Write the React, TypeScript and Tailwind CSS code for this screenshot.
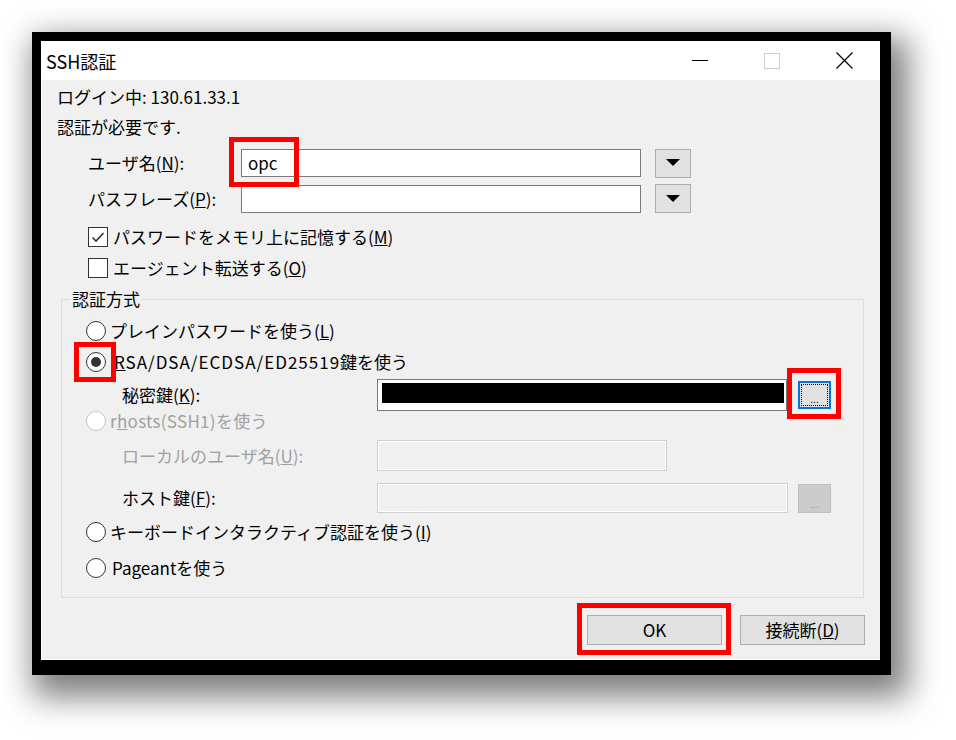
import React from "react";

function Radio({ checked = false, disabled = false }: { checked?: boolean; disabled?: boolean }) {
  return (
    <span
      className={
        "flex h-[20px] w-[20px] shrink-0 items-center justify-center rounded-full border-[1.5px] bg-white " +
        (disabled ? "border-[#c4c4c4]" : "border-[#333333]")
      }
    >
      {checked && <span className="h-[10px] w-[10px] rounded-full bg-[#333333]" />}
    </span>
  );
}

function Checkbox({ checked = false }: { checked?: boolean }) {
  return (
    <span className="flex h-[20px] w-[20px] shrink-0 items-center justify-center border-[1.5px] border-[#333333] bg-white">
      {checked && (
        <svg width="14" height="12" viewBox="0 0 14 12">
          <path d="M1.5 6.5 L5 10 L12.5 2" fill="none" stroke="#333333" strokeWidth="1.6" />
        </svg>
      )}
    </span>
  );
}

function DropButton() {
  return (
    <span className="ml-[14px] flex h-[29px] w-[36px] items-center justify-center border border-[#adadad] bg-[#e1e1e1]">
      <svg width="14" height="8" viewBox="0 0 14 8">
        <polygon points="0,0 14,0 7,7" fill="#000" />
      </svg>
    </span>
  );
}

export default function App() {
  return (
    <div className="relative min-h-[740px] w-[956px] bg-white pl-[32px] pt-[32px] font-['Noto_Sans_CJK_JP','Noto_Sans',sans-serif] text-[17px] leading-[20px] text-black">
      <div className="flex h-[643px] w-[859px] flex-col border-b-[15px] border-l-[9px] border-r-[11px] border-t-[9px] border-black shadow-[9px_14px_30px_8px_rgba(0,0,0,0.5)]">
        {/* title bar */}
        <div className="flex h-[39px] shrink-0 items-center bg-white">
          <span className="pl-[5px] text-[18px]">SSH認証</span>
          <div className="ml-auto flex h-full">
            <span className="flex h-full w-[72px] items-center justify-center">
              <span className="h-[1px] w-[16px] bg-black" />
            </span>
            <span className="flex h-full w-[72px] items-center justify-center">
              <span className="h-[16px] w-[16px] border border-[#cccccc]" />
            </span>
            <span className="flex h-full w-[72px] items-center justify-center">
              <svg width="17" height="17" viewBox="0 0 17 17">
                <path d="M0.5 0.5 L16.5 16.5 M16.5 0.5 L0.5 16.5" stroke="#000" strokeWidth="1.2" />
              </svg>
            </span>
          </div>
        </div>

        {/* content */}
        <div className="flex flex-1 flex-col border-b border-l border-white bg-[#f0f0f0]">
          <div className="mt-[5px] flex h-[24px] items-center pl-[15px]">ログイン中: 130.61.33.1</div>
          <div className="flex h-[36px] items-center pl-[15px]">認証が必要です.</div>

          <div className="flex h-[36px] items-center pl-[46px]">
            <span className="w-[153px] shrink-0">
              ユーザ名(<u>N</u>):
            </span>
            <span className="flex h-[28px] w-[400px] items-center border border-[#7a7a7a] bg-white pl-[6px]">opc</span>
            <DropButton />
          </div>
          <div className="flex h-[35px] items-center pl-[46px]">
            <span className="w-[153px] shrink-0">
              パスフレーズ(<u>P</u>):
            </span>
            <span className="h-[28px] w-[400px] border border-[#7a7a7a] bg-white" />
            <DropButton />
          </div>

          <div className="flex h-[42px] items-center gap-[5px] pl-[46px]">
            <Checkbox checked />
            <span>
              パスワードをメモリ上に記憶する(<u>M</u>)
            </span>
          </div>
          <div className="flex h-[20px] items-center gap-[5px] pl-[46px]">
            <Checkbox />
            <span>
              エージェント転送する(<u>O</u>)
            </span>
          </div>

          <fieldset className="ml-[19px] mt-[11px] w-[803px] border border-[#dcdcdc]">
            <legend className="ml-[8px] px-[2px] leading-[20px]">認証方式</legend>
            <div className="flex flex-col pb-[10px] pt-[7px]">
              <div className="flex h-[30px] items-center gap-[4px] pl-[24px]">
                <Radio />
                <span>
                  プレインパスワードを使う(<u>L</u>)
                </span>
              </div>
              <div className="flex h-[32px] items-center gap-[8px] pl-[24px]">
                <Radio checked />
                <span>
                  <span className="tracking-[1px]">
                    <u>R</u>SA/DSA/ECDSA/ED25519
                  </span>
                  鍵を使う
                </span>
              </div>
              <div className="flex h-[34px] items-center pl-[60px]">
                <span className="w-[255px] shrink-0">
                  秘密鍵(<u>K</u>):
                </span>
                <span className="flex h-[32px] w-[410px] border border-[#7a7a7a] bg-white pl-[4px] pr-[2px] pt-[3px]">
                  <span className="h-[20px] flex-1 bg-black" />
                </span>
                <span className="ml-[11px] flex h-[28px] w-[33px] border-2 border-[#0078d7] bg-[#e1e1e1] p-[1px]">
                  <span className="flex flex-1 items-end justify-center border border-dotted border-black pb-[1px] text-[10px] leading-[10px]">
                    ...
                  </span>
                </span>
              </div>
              <div className="flex h-[18px] items-center gap-[4px] pl-[24px] text-[#a0a0a0]">
                <Radio disabled />
                <span className="tracking-[0.3px]">
                  r<u>h</u>osts(SSH1)を使う
                </span>
              </div>
              <div className="flex h-[51px] items-center pl-[60px]">
                <span className="w-[255px] shrink-0 text-[#a0a0a0]">
                  ローカルのユーザ名(<u>U</u>):
                </span>
                <span className="h-[31px] w-[290px] border border-[#d0d0d0] bg-[#f0f0f0] shadow-[inset_0_0_0_1px_#ffffff]" />
              </div>
              <div className="flex h-[34px] items-center pl-[60px]">
                <span className="w-[255px] shrink-0">
                  ホスト鍵(<u>F</u>):
                </span>
                <span className="h-[30px] w-[411px] border border-[#d0d0d0] bg-[#f0f0f0] shadow-[inset_0_0_0_1px_#ffffff]" />
                <span className="ml-[10px] flex h-[29px] w-[33px] items-end justify-center border border-[#bfbfbf] bg-[#cccccc] pb-[3px] text-[10px] leading-[10px] text-[#a0a0a0]">
                  ...
                </span>
              </div>
              <div className="flex h-[34px] items-center gap-[4px] pl-[24px]">
                <Radio />
                <span>
                  キーボードインタラクティブ認証を使う(<u>I</u>)
                </span>
              </div>
              <div className="flex h-[38px] items-center gap-[6px] pl-[24px]">
                <Radio />
                <span>Pageantを使う</span>
              </div>
            </div>
          </fieldset>

          <div className="mt-[17px] flex justify-end gap-[18px] pr-[15px]">
            <span className="flex h-[30px] w-[135px] items-center justify-center border border-[#adadad] bg-[#e1e1e1]">
              OK
            </span>
            <span className="flex h-[30px] w-[125px] items-center justify-center border border-[#adadad] bg-[#e1e1e1]">
              接続断(<u>D</u>)
            </span>
          </div>
        </div>
      </div>

      {/* red annotation boxes */}
      <div className="absolute left-[229px] top-[137px] h-[50px] w-[70px] border-[5px] border-[#ff0000]" />
      <div className="absolute left-[74px] top-[342px] h-[40px] w-[42px] border-[5px] border-[#ff0000]" />
      <div className="absolute left-[787px] top-[368px] h-[51px] w-[54px] border-[5px] border-[#ff0000]" />
      <div className="absolute left-[577px] top-[603px] h-[52px] w-[154px] border-[5px] border-[#ff0000]" />
    </div>
  );
}
